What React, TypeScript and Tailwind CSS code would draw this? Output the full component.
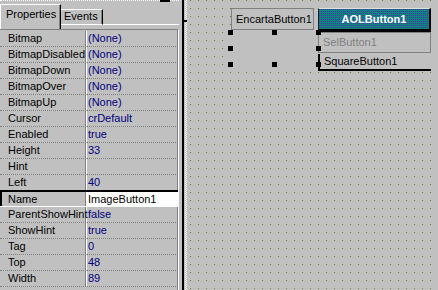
import React from "react";

const rows: [string, string][] = [
  ["Bitmap", "(None)"],
  ["BitmapDisabled", "(None)"],
  ["BitmapDown", "(None)"],
  ["BitmapOver", "(None)"],
  ["BitmapUp", "(None)"],
  ["Cursor", "crDefault"],
  ["Enabled", "true"],
  ["Height", "33"],
  ["Hint", ""],
  ["Left", "40"],
  ["Name", "ImageButton1"],
  ["ParentShowHint", "false"],
  ["ShowHint", "true"],
  ["Tag", "0"],
  ["Top", "48"],
  ["Width", "89"],
];

function Row({ name, value, index }: { name: string; value: string; index: number }) {
  const selected = index === 10;
  const beforeSelected = index === 9;
  if (selected) {
    return (
      <div className="flex h-[16px] border-t border-b border-t-black border-b-white">
        <div className="w-[86px] shrink-0 whitespace-nowrap border-l-2 border-r border-l-black border-r-[#808080] pl-[6px] pt-[2px]">
          {name}
        </div>
        <div className="flex-1 whitespace-nowrap border-l border-white bg-white pl-[1px] pt-[2px] text-black">
          {value}
        </div>
      </div>
    );
  }
  return (
    <div
      className={
        beforeSelected
          ? "flex h-[16px] border-b border-black"
          : "flex h-[16px] border-b border-dotted border-[#808080]"
      }
    >
      <div className="relative z-10 w-[86px] shrink-0 whitespace-nowrap border-r border-[#808080] pl-[8px] pt-[2px]">
        {name}
      </div>
      <div className="flex-1 whitespace-nowrap border-l border-white pl-[1px] pt-[2px] text-[#000080]">
        {value}
      </div>
    </div>
  );
}

function Handle({ cls }: { cls: string }) {
  return <div className={`absolute h-[5px] w-[5px] bg-black ${cls}`} />;
}

export default function App() {
  return (
    <div className="flex h-[290px] w-[438px] overflow-hidden bg-[#c0c0c0] font-['Liberation_Sans',Arial,sans-serif] text-[11px] leading-none text-black">
      {/* Object Inspector */}
      <div className="flex w-[179px] shrink-0 flex-col">
        <div className="flex h-[2px]">
          <div className="w-[160px] border-t border-dotted border-white" />
          <div className="h-[2px] w-[10px] bg-black" />
          <div className="flex-1 border-t border-dotted border-white" />
        </div>
        <div className="flex h-[27px] items-start">
          <div className="mt-[2px] h-[25px] w-[61px] border-l border-t border-r border-l-white border-t-white border-r-black pl-[5px] pt-[4px] shadow-[inset_-1px_0_0_#808080]">
            Properties
          </div>
          <div className="mt-[7px] h-[16px] w-[42px] border-t border-b border-r border-t-white border-b-white border-r-black pl-[3px] pt-[1px] shadow-[inset_-1px_0_0_#808080]">
            Events
          </div>
          <div className="h-[23px] flex-1 border-b border-white" />
        </div>
        <div className="flex flex-1 flex-col border-t border-r border-t-[#808080] border-r-white pt-px shadow-[inset_-1px_0_0_#808080]">
          {rows.map(([n, v], i) => (
            <Row key={n} name={n} value={v} index={i} />
          ))}
        </div>
      </div>

      {/* splitter */}
      <div className="w-[3px] shrink-0" />
      <div className="relative flex shrink-0">
        <div className="w-[2px] bg-black" />
        <div className="w-px" />
        <div className="w-[2px] bg-[image:repeating-conic-gradient(#ffffff_0_25%,#c0c0c0_0_50%)] bg-[length:2px_2px]" />
        <div className="absolute left-0 top-[20px] h-[2px] w-[5px] bg-black" />
      </div>

      {/* Form designer canvas */}
      <div className="relative flex-1 bg-[#c0c0c0] bg-[image:linear-gradient(to_bottom,transparent_1px,#c0c0c0_1px),linear-gradient(to_right,#808000_1px,transparent_1px)] bg-[length:8px_8px] bg-[position:3px_0px]">
        <div className="absolute left-[44px] top-[8px] flex h-[22px] w-[83px] items-center border border-[#808080] bg-[#c0c0c0] pl-[4px]">
          EncartaButton1
        </div>

        <div className="absolute left-[43px] top-[32px] h-[33px] w-[89px] bg-[#c0c0c0]" />

        <div className="absolute left-[131px] top-[8px] flex h-[24px] w-[113px] items-center justify-center border-t border-l border-r-2 border-b-[3px] border-t-[#e0e0e0] border-l-[#202020] border-r-black border-b-black bg-[#127c84] bg-[image:linear-gradient(to_bottom,transparent_1px,#0f8584_1px),linear-gradient(to_right,#3c4690_1px,#1a7090_1px)] bg-[length:2px_2px] font-bold text-white">
          AOLButton1
        </div>

        <div className="absolute left-[131px] top-[32px] flex h-[21px] w-[113px] items-center border border-[#808080] bg-[#c0c0c0] pl-[4px] text-[#808080]">
          SelButton1
        </div>

        <div className="absolute left-[131px] top-[54px] flex h-[17px] w-[113px] items-center border-l-2 border-b-2 border-black bg-[#c0c0c0] pl-[4px]">
          SquareButton1
        </div>

        <Handle cls="left-[41px] top-[30px]" />
        <Handle cls="left-[85px] top-[30px]" />
        <Handle cls="left-[129px] top-[30px]" />
        <Handle cls="left-[41px] top-[46px]" />
        <Handle cls="left-[129px] top-[46px]" />
        <Handle cls="left-[41px] top-[62px]" />
        <Handle cls="left-[85px] top-[62px]" />
        <Handle cls="left-[129px] top-[62px]" />
      </div>
    </div>
  );
}
